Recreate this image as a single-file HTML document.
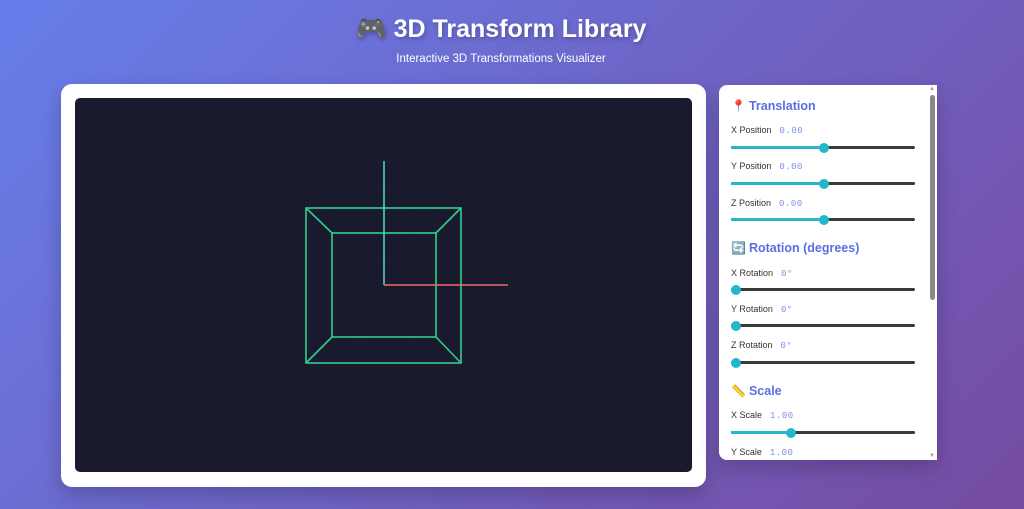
<!DOCTYPE html>
<html><head><meta charset="utf-8">
<style>
*{box-sizing:border-box;margin:0;padding:0}
html,body{width:1024px;height:509px;overflow:hidden}
body{background:linear-gradient(135deg,#667eea 0%,#764ba2 100%);font-family:"Liberation Sans","DejaVu Sans",sans-serif;position:relative}
h1{position:absolute;top:15px;left:0;width:1002px;text-align:center;color:#fff;font-size:25px;font-weight:bold;text-shadow:1px 2px 4px rgba(0,0,0,.25)}
.sub{position:absolute;top:53px;left:0;width:1002px;text-align:center;color:#fff;font-size:11.5px}
.card{position:absolute;left:61px;top:84px;width:645px;height:403px;background:#fff;border-radius:11px;box-shadow:0 8px 20px rgba(0,0,0,.2)}
.cv{position:absolute;left:14px;top:14px;width:617px;height:374px;background:#1a1a2e;border-radius:5px;overflow:hidden}
.panel{position:absolute;left:719px;top:85px;width:218px;height:375px;background:#fff;border-radius:8px 0 0 8px;box-shadow:0 8px 20px rgba(0,0,0,.2);overflow:hidden}
.thumbsb{position:absolute;right:2px;top:10px;width:5px;height:205px;background:#888;border-radius:3px}
.h{position:absolute;left:12px;font-size:12.5px;font-weight:bold;color:#5a6fe0}
.h span{font-size:12px;margin-right:3px}
.l{position:absolute;left:12px;font-size:9px;color:#333}
.l b{font-family:"Liberation Mono",monospace;font-weight:normal;color:#7b8fe8;margin-left:8px;font-size:9px;letter-spacing:.5px}
.tr{position:absolute;left:12px;width:184px;height:3px;background:#3a3a3a;border-radius:2px}
.tr i{position:absolute;left:0;top:0;height:3px;background:#2bb5c8}
.tr u{position:absolute;top:-3.5px;width:10px;height:10px;border-radius:50%;background:#22b8cc;margin-left:-5px}
</style></head><body>
<h1>🎮 3D Transform Library</h1>
<div class="sub">Interactive 3D Transformations Visualizer</div>
<div class="card"><div class="cv">
<svg width="617" height="374" style="position:absolute;left:0;top:0">
<g stroke="#1c1d31" stroke-width="1">
<line x1="185" y1="62" x2="185" y2="312"/><line x1="210" y1="62" x2="210" y2="312"/><line x1="235" y1="62" x2="235" y2="312"/><line x1="260" y1="62" x2="260" y2="312"/><line x1="285" y1="62" x2="285" y2="312"/><line x1="335" y1="62" x2="335" y2="312"/><line x1="360" y1="62" x2="360" y2="312"/><line x1="385" y1="62" x2="385" y2="312"/><line x1="410" y1="62" x2="410" y2="312"/><line x1="435" y1="62" x2="435" y2="312"/>
<line x1="185" y1="62" x2="435" y2="62"/><line x1="185" y1="87" x2="435" y2="87"/><line x1="185" y1="112" x2="435" y2="112"/><line x1="185" y1="137" x2="435" y2="137"/><line x1="185" y1="162" x2="435" y2="162"/><line x1="185" y1="212" x2="435" y2="212"/><line x1="185" y1="237" x2="435" y2="237"/><line x1="185" y1="262" x2="435" y2="262"/><line x1="185" y1="287" x2="435" y2="287"/><line x1="185" y1="312" x2="435" y2="312"/>
</g>
<g stroke="#2ecf8a" stroke-width="1.6" fill="none">
<rect x="231" y="110" width="155" height="155"/>
<rect x="257" y="135" width="104" height="104"/>
<line x1="231" y1="110" x2="257" y2="135"/><line x1="386" y1="110" x2="361" y2="135"/>
<line x1="231" y1="265" x2="257" y2="239"/><line x1="386" y1="265" x2="361" y2="239"/>
</g>
<line x1="309" y1="63" x2="309" y2="187" stroke="#4ecdc4" stroke-width="1.6"/>
<line x1="309" y1="187" x2="433" y2="187" stroke="#f06a6a" stroke-width="1.6"/>
</svg>
</div></div>
<div class="panel">
<div class="thumbsb"></div>
<div style="position:absolute;right:2px;top:1px;font-size:6px;color:#999">▲</div>
<div style="position:absolute;right:2px;bottom:1px;font-size:6px;color:#999">▼</div>
<div class="h" style="top:14px"><span>📍</span>Translation</div>
<div class="l" style="top:40px">X Position<b>0.00</b></div>
<div class="tr" style="top:61px"><i style="width:93px"></i><u style="left:93px"></u></div>
<div class="l" style="top:76px">Y Position<b>0.00</b></div>
<div class="tr" style="top:97px"><i style="width:93px"></i><u style="left:93px"></u></div>
<div class="l" style="top:113px">Z Position<b>0.00</b></div>
<div class="tr" style="top:133px"><i style="width:93px"></i><u style="left:93px"></u></div>
<div class="h" style="top:156px"><span>🔄</span>Rotation (degrees)</div>
<div class="l" style="top:183px">X Rotation<b>0°</b></div>
<div class="tr" style="top:203px"><u style="left:5px"></u></div>
<div class="l" style="top:219px">Y Rotation<b>0°</b></div>
<div class="tr" style="top:239px"><u style="left:5px"></u></div>
<div class="l" style="top:255px">Z Rotation<b>0°</b></div>
<div class="tr" style="top:276px"><u style="left:5px"></u></div>
<div class="h" style="top:299px"><span>📏</span>Scale</div>
<div class="l" style="top:325px">X Scale<b>1.00</b></div>
<div class="tr" style="top:346px"><i style="width:60px"></i><u style="left:60px"></u></div>
<div class="l" style="top:362px">Y Scale<b>1.00</b></div>
</div>
</body></html>
